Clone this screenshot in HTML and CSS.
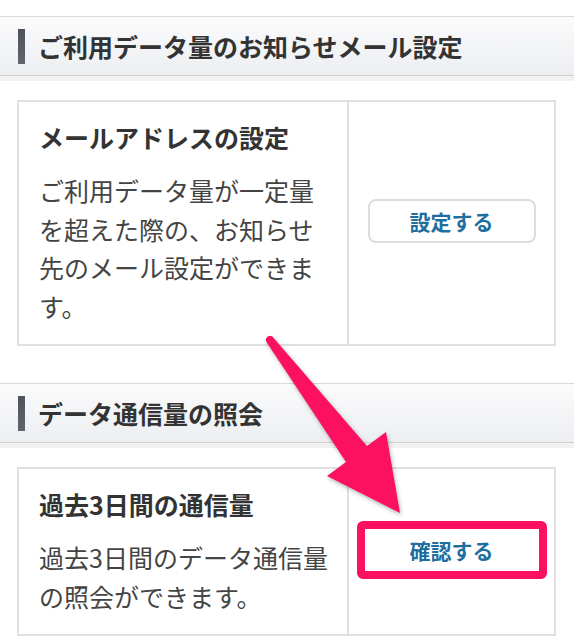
FILE: index.html
```html
<!DOCTYPE html>
<html lang="ja">
<head>
  <meta charset="UTF-8">
  <title>データ通信量</title>
  <link rel="stylesheet" href="styles.css">
</head>
<body>

  <h2 class="sec-head">ご利用データ量のお知らせメール設定</h2>

  <div class="card">
    <div class="card-text">
      <h3>メールアドレスの設定</h3>
      <p>ご利用データ量が一定量を超えた際の、お知らせ先のメール設定ができます。</p>
    </div>
    <div class="card-action">
      <button class="btn">設定する</button>
    </div>
  </div>

  <h2 class="sec-head">データ通信量の照会</h2>

  <div class="card">
    <div class="card-text">
      <h3>過去3日間の通信量</h3>
      <p>過去3日間のデータ通信量の照会ができます。</p>
    </div>
    <div class="card-action">
      <button class="btn hl">確認する</button>
    </div>
  </div>

  <!-- annotation arrow drawn over the page -->
  <svg class="arrow" width="574" height="640" viewBox="0 0 574 640">
    <path d="M266.8 342.4 A4 4 0 0 1 273.2 337.6 L367 446 L386 432 L400 513 L327 476 L346 462 Z" fill="#fc1160"/>
  </svg>

</body>
</html>
```

FILE: styles.css
```css
body {
  margin: 0;
  padding-top: 16px;
  font-family: "Noto Sans CJK JP", sans-serif;
  color: #444;
  background: #fff;
  position: relative;
}
.sec-head {
  display: flex;
  align-items: center;
  gap: 13px;
  height: 58px;
  margin: 0 0 24px;
  padding-left: 18px;
  border-top: 1px solid #dadada;
  border-bottom: 1px solid #cfcfcf;
  background: linear-gradient(#fbfbfc, #eceef1);
  box-shadow: 0 5px 0 #f1f1f1;
  font-size: 25px;
  font-weight: bold;
  color: #333;
}
.sec-head::before {
  content: "";
  width: 7px;
  height: 35px;
  background: linear-gradient(#4d525b, #60656e);
}
.card {
  display: grid;
  grid-template-columns: 330px 1fr;
  margin: 0 18px 37px 17px;
  border: 2px solid #e0e0e0;
}
.card:last-of-type {
  margin-bottom: 0;
}
.card-text {
  padding: 16px 15px 19px 20px;
  border-right: 2px solid #e0e0e0;
}
.card-text h3 {
  margin: 0 0 15px;
  font-size: 25px;
  line-height: 38px;
  font-weight: bold;
  color: #333;
}
.card-text p {
  margin: 0;
  font-size: 25px;
  line-height: 38.5px;
}
.card-action {
  display: flex;
  align-items: center;
  justify-content: center;
}
.btn {
  width: 168px;
  height: 44px;
  margin-bottom: 4px;
  border: 2px solid #dcdcdc;
  border-radius: 8px;
  background: #fff;
  font-family: inherit;
  font-size: 21px;
  font-weight: bold;
  color: #1e6e9e;
}
.btn.hl {
  width: 190px;
  height: 58px;
  border: 8px solid #fc1160;
  border-radius: 6px;
}
.arrow {
  position: absolute;
  top: 0;
  left: 0;
  pointer-events: none;
  filter: drop-shadow(1px 2px 2px rgba(0, 0, 0, 0.3));
}
```
